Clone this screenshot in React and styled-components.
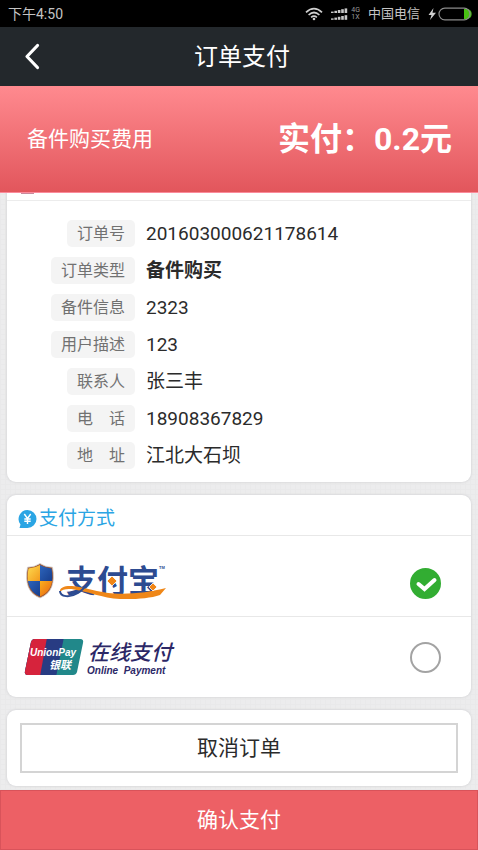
import React, { useState } from 'react';
import styled, { createGlobalStyle, css } from 'styled-components';

const SANS = 'Roboto, "Noto Sans CJK SC", sans-serif';

const GlobalStyle = createGlobalStyle`
  *, *::before, *::after { box-sizing: border-box; }
  body {
    margin: 0;
    font-family: ${SANS};
    color: #2b2b2b;
    background-color: #ececed;
    background-image:
      repeating-linear-gradient(0deg, #e9e9ea 0 1px, transparent 1px 5px),
      repeating-linear-gradient(90deg, #e9e9ea 0 1px, transparent 1px 5px);
  }
  button, input { font-family: inherit; margin: 0; }
`;

const Page = styled.div`
  display: flex;
  flex-direction: column;
  min-height: 100vh;
`;

const StatusBar = styled.div`
  display: flex;
  align-items: center;
  height: 27px;
  padding: 0 6px 0 8px;
  background: #000;
  color: #c4c4c4;
  font-size: 14px;
  line-height: 20px;
`;

const StatusIcons = styled.div`
  display: flex;
  align-items: center;
  margin-left: auto;
`;

const NetworkType = styled.span`
  margin: 0 8px 0 3px;
  font-size: 7px;
  line-height: 7px;
  color: #9a9a9a;
  white-space: pre-line;
`;

const Carrier = styled.span`
  margin-right: 8px;
  font-size: 13px;
`;

const WifiIcon = styled.svg`
  width: 18px;
  height: 14px;
  margin-right: 8px;
`;

const SignalIcon = styled.svg`
  width: 17px;
  height: 14px;
`;

const BatteryIcon = styled.svg`
  width: 44px;
  height: 14px;
`;

const TitleBar = styled.header`
  display: grid;
  grid-template-columns: 64px 1fr 64px;
  align-items: center;
  height: 59px;
  background: #23282c;
  color: #fff;
`;

const BackButton = styled.button`
  display: flex;
  align-items: center;
  justify-content: center;
  height: 59px;
  padding: 0;
  border: 0;
  background: none;
  svg { width: 18px; height: 28px; }
`;

const Title = styled.h1`
  margin: 0 0 0 6px;
  font-size: 24px;
  line-height: 32px;
  font-weight: 400;
  text-align: center;
`;

const Banner = styled.section`
  display: flex;
  align-items: center;
  justify-content: space-between;
  height: 107px;
  padding: 0 26px 0 27px;
  color: #fff;
  background: linear-gradient(#ff8a8f, #e2565c);
  border-bottom: 1px solid #fb8b9b;
`;

const BannerLabel = styled.span`
  font-size: 21px;
  line-height: 30px;
`;

const BannerPrice = styled.strong`
  font-size: 32px;
  line-height: 44px;
  font-weight: 700;
`;

const Content = styled.main`
  display: flex;
  flex: 1;
  flex-direction: column;
  gap: 13px;
  padding: 0 7px 4px;
`;

const Card = styled.section`
  background: #fff;
  border-radius: ${({ $flush }) => ($flush ? '0 0 9px 9px' : '9px')};
  box-shadow: 0 0 2px 1px #dcdcde;
  clip-path: ${({ $flush }) => ($flush ? 'inset(0 -4px -4px -4px)' : 'none')};
`;

const ScrolledHeading = styled.div`
  height: 8px;
  padding-left: 14px;
  border-bottom: 1px solid #ececec;
  &::before {
    content: '';
    display: block;
    width: 13px;
    height: 1px;
    background: #c88a9c;
  }
`;

const Details = styled.dl`
  display: flex;
  flex-direction: column;
  gap: 10px;
  margin: 0;
  padding: 19px 14px 13px;
`;

const DetailRow = styled.div`
  display: grid;
  grid-template-columns: 114px 1fr;
  column-gap: 11px;
  align-items: center;
`;

const DetailLabel = styled.dt`
  justify-self: end;
  padding: 0 10px;
  border-radius: 5px;
  background: #f4f4f4;
  color: #717171;
  font-size: 16px;
  line-height: 27px;
`;

const DetailValue = styled.dd`
  margin: 0;
  font-size: 19px;
  line-height: 25px;
  font-weight: ${({ $strong }) => ($strong ? 700 : 400)};
`;

const SectionTitle = styled.h2`
  display: flex;
  align-items: center;
  gap: 2px;
  height: 41px;
  margin: 0;
  padding: 8px 11px 0;
  border-bottom: 1px solid #e8e8e8;
  color: #2ba5e4;
  font-size: 19px;
  line-height: 28px;
  font-weight: 400;
  svg { width: 19px; height: 20px; }
`;

const Method = styled.label`
  display: flex;
  align-items: center;
  justify-content: space-between;
  height: ${({ $low }) => ($low ? '80px' : '81px')};
  padding: ${({ $low }) => ($low ? '14px' : '0')} 30px 0 15px;
  cursor: pointer;
  & + & { border-top: 1px solid #e8e8e8; }
`;

const MethodLogo = styled.svg`
  width: 154px;
  height: 50px;
  overflow: visible;
`;

const RadioBox = styled.span`
  display: grid;
  > * { grid-area: 1 / 1; }
  svg { width: 31px; height: 31px; pointer-events: none; }
`;

const Radio = styled.input`
  appearance: none;
  width: 31px;
  height: 31px;
  border: 2px solid #a3a3a3;
  border-radius: 50%;
  background: #fff;
  &:checked { border-color: #32ad32; background: #32ad32; }
`;

const CancelArea = styled(Card)`
  padding: 13px;
`;

const buttonText = css`
  display: block;
  width: 100%;
  padding: 0 0 4px;
  font-size: 21px;
  font-weight: 400;
`;

const CancelButton = styled.button`
  ${buttonText}
  height: 50px;
  border: 2px solid #d4d4d4;
  background: #fff;
  color: #2b2b2b;
`;

const Footer = styled.footer`
  position: sticky;
  bottom: 0;
`;

const ConfirmButton = styled.button`
  ${buttonText}
  height: 60px;
  border: 1px solid #d9535a;
  background: #ed6065;
  color: #fff;
`;

const details = [
  ['订单号', '201603000621178614'],
  ['订单类型', '备件购买', true],
  ['备件信息', '2323'],
  ['用户描述', '123'],
  ['联系人', '张三丰'],
  ['电\u3000话', '18908367829'],
  ['地\u3000址', '江北大石坝'],
];

function Wifi() {
  return (
    <WifiIcon viewBox="0 0 18 14" fill="none" stroke="#d0d0d0" strokeWidth="1.7" aria-hidden="true">
      <path d="M1 5.3Q9-2.2 17 5.3M3.6 8Q9 3 14.4 8M6.1 10.4Q9 8 11.9 10.4" />
      <circle cx="9" cy="12" r="1.3" fill="#d0d0d0" stroke="none" />
    </WifiIcon>
  );
}

function Signal() {
  const bars = [0, 1, 2, 3, 4];
  return (
    <SignalIcon viewBox="0 0 17 14" fill="#c8c8c8" aria-hidden="true">
      {bars.map((i) => (
        <React.Fragment key={i}>
          <rect x={i * 3.4} y={4.6 - i * 0.8} width="2.6" height={1.4 + i * 0.8} />
          <rect x={i * 3.4} y={11.4 - i * 0.8} width="2.6" height={1.4 + i * 0.8} />
        </React.Fragment>
      ))}
    </SignalIcon>
  );
}

function Battery() {
  return (
    <BatteryIcon viewBox="0 0 44 14" aria-hidden="true">
      <path d="M5.5 1 0.5 8h3L2 13 8 5.8H4.5z" fill="#d0d0d0" />
      <path d="M36 2h3a4.7 5 0 0 1 0 10h-3z" fill="#48c012" />
      <rect x="11" y="1.2" width="31" height="11.6" rx="5.8" fill="none" stroke="#8b8b8b" strokeWidth="1.2" />
    </BatteryIcon>
  );
}

function AlipayLogo() {
  return (
    <MethodLogo viewBox="0 0 154 50" role="img" aria-label="支付宝">
      <defs>
        <linearGradient id="gold" x1="0" y1="0" x2="1" y2="1">
          <stop offset="0" stopColor="#ffe75a" />
          <stop offset="1" stopColor="#f39a1c" />
        </linearGradient>
        <linearGradient id="amber" x1="0" y1="0" x2="1" y2="1">
          <stop offset="0" stopColor="#fbb01e" />
          <stop offset="1" stopColor="#e2500c" />
        </linearGradient>
        <linearGradient id="navy" x1="0" y1="0" x2="1" y2="1">
          <stop offset="0" stopColor="#2f68c0" />
          <stop offset="1" stopColor="#153a88" />
        </linearGradient>
        <clipPath id="shield">
          <path d="M18 7Q13 10 6.500 10.500C4 24 7 34 18 38.500C29 34 32 24 29.500 10.500Q23 10 18 7z" />
        </clipPath>
      </defs>
      <path d="M18 5.500Q13 9 5.500 9.200C2.500 25 6.500 35.500 18 40C29.500 35.500 33.500 25 30.500 9.200Q23 9 18 5.500z" fill="#a2562c" stroke="#d2d2d2" strokeWidth="0.800" />
      <g clipPath="url(#shield)">
        <rect x="3" y="5" width="15" height="18" fill="url(#gold)" />
        <rect x="18" y="5" width="15" height="18" fill="url(#navy)" />
        <rect x="3" y="23" width="15" height="18" fill="url(#navy)" />
        <rect x="18" y="23" width="15" height="18" fill="url(#amber)" />
      </g>
      <text x="44" y="34" fontFamily='"Noto Sans CJK SC", sans-serif' fontSize="31" fontWeight="700" fill="#2d4b91">支付宝</text>
      <path d="M38 34C37 29 44 27.500 50 28C62 29 76 34.500 92 35.500C110 36.500 128 34 144 30L138 37C128 40.500 112 41.500 98 41C80 40 66 33.500 52 31.500C45 30.500 40 31.500 38 34z" fill="#ef8718" />
      <path d="M38 33C38 39 48 40 56 35C59 33 61 31 63 29" fill="none" stroke="#2d4b91" strokeWidth="2" />
      <path d="M90 18l5 5-5 5-5-5zM131 25l4 4-4 4-4-4z" fill="#f08617" stroke="#fff" strokeWidth="0.800" />
      <text x="137" y="11" fontFamily='"Liberation Sans", sans-serif' fontSize="4" fontWeight="700" fill="#2d4b91">TM</text>
    </MethodLogo>
  );
}

function UnionPayLogo() {
  return (
    <MethodLogo viewBox="0 0 154 50" role="img" aria-label="UnionPay 银联 在线支付 Online Payment">
      <defs>
        <clipPath id="union-card">
          <path d="M13 7H58Q62 7 61 11L55 40Q54 43 51 43H6Q2 43 3 39L9 10Q10 7 13 7z" />
        </clipPath>
      </defs>
      <g clipPath="url(#union-card)">
        <rect width="64" height="50" fill="#21888a" />
        <path d="M0 0H43L33 50H0z" fill="#283c83" />
        <path d="M0 0H26L17 50H0z" fill="#d6233c" />
      </g>
      <g fill="#fff" fontStyle="italic" fontWeight="700">
        <text x="8" y="24" fontFamily='"Liberation Sans", sans-serif' fontSize="10">UnionPay</text>
        <text x="27" y="37" fontFamily='"Noto Sans CJK SC", sans-serif' fontSize="11">银联</text>
      </g>
      <g fill="#2c2867" fontStyle="italic">
        <text x="66" y="28" fontFamily='"Noto Sans CJK SC", sans-serif' fontSize="21" fontWeight="500">在线支付</text>
        <text x="65" y="42" fontFamily='"Liberation Sans", sans-serif' fontSize="10" fontWeight="700">Online{'\u00a0 '}Payment</text>
      </g>
    </MethodLogo>
  );
}

function PayMethod({ value, selected, onSelect, low, children }) {
  const checked = selected === value;
  return (
    <Method $low={low}>
      {children}
      <RadioBox>
        <Radio type="radio" name="method" value={value} checked={checked} onChange={() => onSelect(value)} />
        {checked && (
          <svg viewBox="0 0 31 31" fill="none" stroke="#fff" strokeWidth="4" aria-hidden="true">
            <path d="M8.500 16l6 5L24.500 12" strokeLinecap="round" />
          </svg>
        )}
      </RadioBox>
    </Method>
  );
}

export default function App() {
  const [method, setMethod] = useState('alipay');
  return (
    <>
      <GlobalStyle />
      <Page>
        <StatusBar>
          <span>下午4:50</span>
          <StatusIcons>
            <Wifi />
            <Signal />
            <NetworkType>{'4G\n1X'}</NetworkType>
            <Carrier>中国电信</Carrier>
            <Battery />
          </StatusIcons>
        </StatusBar>
        <TitleBar>
          <BackButton type="button" aria-label="返回">
            <svg viewBox="0 0 18 28" fill="none" stroke="#fff" strokeWidth="3.200" strokeLinecap="round" strokeLinejoin="round">
              <path d="M14.500 2.500 4 13.500 14.500 24.500" />
            </svg>
          </BackButton>
          <Title>订单支付</Title>
        </TitleBar>
        <Banner>
          <BannerLabel>备件购买费用</BannerLabel>
          <BannerPrice>实付：0.2元</BannerPrice>
        </Banner>
        <Content>
          <Card $flush>
            <ScrolledHeading />
            <Details>
              {details.map(([label, value, strong]) => (
                <DetailRow key={label}>
                  <DetailLabel>{label}</DetailLabel>
                  <DetailValue $strong={strong}>{value}</DetailValue>
                </DetailRow>
              ))}
            </Details>
          </Card>
          <Card>
            <SectionTitle>
              <svg viewBox="0 0 19 20" aria-hidden="true">
                <path d="M9.500 1a9 9 0 1 1 0 18H1.500l1-3.500A9 9 0 0 1 9.500 1z" fill="#2ba5e4" />
                <path d="M6.300 5l3.200 4.500L12.700 5M9.500 9.500V15M6.300 10h6.400M6.300 12.300h6.400" fill="none" stroke="#fff" strokeWidth="1.400" />
              </svg>
              支付方式
            </SectionTitle>
            <PayMethod low value="alipay" selected={method} onSelect={setMethod}>
              <AlipayLogo />
            </PayMethod>
            <PayMethod value="unionpay" selected={method} onSelect={setMethod}>
              <UnionPayLogo />
            </PayMethod>
          </Card>
          <CancelArea>
            <CancelButton type="button">取消订单</CancelButton>
          </CancelArea>
        </Content>
        <Footer>
          <ConfirmButton type="button">确认支付</ConfirmButton>
        </Footer>
      </Page>
    </>
  );
}
